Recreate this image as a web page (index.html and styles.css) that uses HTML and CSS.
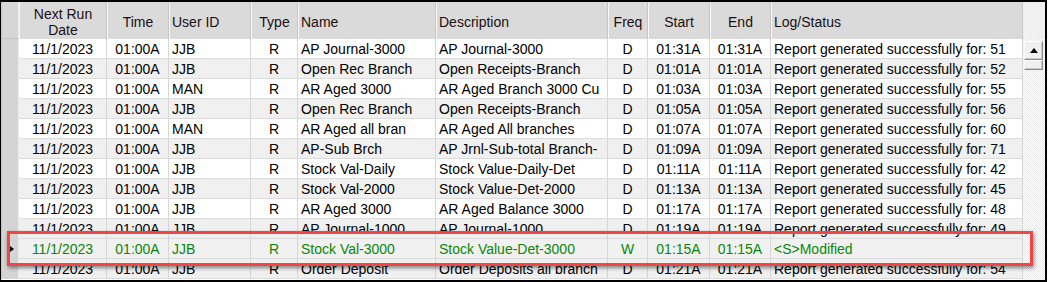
FILE: index.html
```html
<!DOCTYPE html>
<html>
<head>
<meta charset="utf-8">
<link rel="stylesheet" href="styles.css">
</head>
<body>
<div class="frame">
  <div class="grid">
    <div class="row head">
      <div class="rh"></div>
      <div class="hc c">Next Run<br>Date</div>
      <div class="hc c">Time</div>
      <div class="hc">User ID</div>
      <div class="hc c">Type</div>
      <div class="hc">Name</div>
      <div class="hc">Description</div>
      <div class="hc c">Freq</div>
      <div class="hc c">Start</div>
      <div class="hc c">End</div>
      <div class="hc">Log/Status</div>
    </div>
    <div class="row">
      <div class="rh"></div><div class="d c">11/1/2023</div><div class="d c">01:00A</div><div class="d">JJB</div><div class="d c">R</div><div class="d">AP Journal-3000</div><div class="d">AP Journal-3000</div><div class="d c">D</div><div class="d c">01:31A</div><div class="d c">01:31A</div><div class="d">Report generated successfully for: 51</div>
    </div>
    <div class="row alt">
      <div class="rh"></div><div class="d c">11/1/2023</div><div class="d c">01:00A</div><div class="d">JJB</div><div class="d c">R</div><div class="d">Open Rec Branch</div><div class="d">Open Receipts-Branch</div><div class="d c">D</div><div class="d c">01:01A</div><div class="d c">01:01A</div><div class="d">Report generated successfully for: 52</div>
    </div>
    <div class="row">
      <div class="rh"></div><div class="d c">11/1/2023</div><div class="d c">01:00A</div><div class="d">MAN</div><div class="d c">R</div><div class="d">AR Aged 3000</div><div class="d">AR Aged Branch 3000 Cu</div><div class="d c">D</div><div class="d c">01:03A</div><div class="d c">01:03A</div><div class="d">Report generated successfully for: 55</div>
    </div>
    <div class="row alt">
      <div class="rh"></div><div class="d c">11/1/2023</div><div class="d c">01:00A</div><div class="d">JJB</div><div class="d c">R</div><div class="d">Open Rec Branch</div><div class="d">Open Receipts-Branch</div><div class="d c">D</div><div class="d c">01:05A</div><div class="d c">01:05A</div><div class="d">Report generated successfully for: 56</div>
    </div>
    <div class="row">
      <div class="rh"></div><div class="d c">11/1/2023</div><div class="d c">01:00A</div><div class="d">MAN</div><div class="d c">R</div><div class="d">AR Aged all bran</div><div class="d">AR Aged All branches</div><div class="d c">D</div><div class="d c">01:07A</div><div class="d c">01:07A</div><div class="d">Report generated successfully for: 60</div>
    </div>
    <div class="row alt">
      <div class="rh"></div><div class="d c">11/1/2023</div><div class="d c">01:00A</div><div class="d">JJB</div><div class="d c">R</div><div class="d">AP-Sub Brch</div><div class="d">AP Jrnl-Sub-total Branch-</div><div class="d c">D</div><div class="d c">01:09A</div><div class="d c">01:09A</div><div class="d">Report generated successfully for: 71</div>
    </div>
    <div class="row">
      <div class="rh"></div><div class="d c">11/1/2023</div><div class="d c">01:00A</div><div class="d">JJB</div><div class="d c">R</div><div class="d">Stock Val-Daily</div><div class="d">Stock Value-Daily-Det</div><div class="d c">D</div><div class="d c">01:11A</div><div class="d c">01:11A</div><div class="d">Report generated successfully for: 42</div>
    </div>
    <div class="row alt">
      <div class="rh"></div><div class="d c">11/1/2023</div><div class="d c">01:00A</div><div class="d">JJB</div><div class="d c">R</div><div class="d">Stock Val-2000</div><div class="d">Stock Value-Det-2000</div><div class="d c">D</div><div class="d c">01:13A</div><div class="d c">01:13A</div><div class="d">Report generated successfully for: 45</div>
    </div>
    <div class="row">
      <div class="rh"></div><div class="d c">11/1/2023</div><div class="d c">01:00A</div><div class="d">JJB</div><div class="d c">R</div><div class="d">AR Aged 3000</div><div class="d">AR Aged Balance 3000</div><div class="d c">D</div><div class="d c">01:17A</div><div class="d c">01:17A</div><div class="d">Report generated successfully for: 48</div>
    </div>
    <div class="row alt">
      <div class="rh"></div><div class="d c">11/1/2023</div><div class="d c">01:00A</div><div class="d">JJB</div><div class="d c">R</div><div class="d">AP Journal-1000</div><div class="d">AP Journal-1000</div><div class="d c">D</div><div class="d c">01:19A</div><div class="d c">01:19A</div><div class="d">Report generated successfully for: 49</div>
    </div>
    <div class="row sel">
      <div class="rh"><span class="cur"></span></div><div class="d c">11/1/2023</div><div class="d c">01:00A</div><div class="d">JJB</div><div class="d c">R</div><div class="d">Stock Val-3000</div><div class="d">Stock Value-Det-3000</div><div class="d c">W</div><div class="d c">01:15A</div><div class="d c">01:15A</div><div class="d">&lt;S&gt;Modified</div>
    </div>
    <div class="row alt">
      <div class="rh"></div><div class="d c">11/1/2023</div><div class="d c">01:00A</div><div class="d">JJB</div><div class="d c">R</div><div class="d">Order Deposit</div><div class="d">Order Deposits all branch</div><div class="d c">D</div><div class="d c">01:21A</div><div class="d c">01:21A</div><div class="d">Report generated successfully for: 54</div>
    </div>
  </div>
  <div class="scroll">
    <div class="scroll-top"></div>
    <div class="track">
      <div class="sbtn"><span class="up"></span></div>
      <div class="thumb"></div>
    </div>
  </div>
  <div class="mark"></div>
</div>
</body>
</html>
```

FILE: styles.css
```css
html, body {
  margin: 0;
  padding: 0;
  background: #fff;
}
body {
  font-family: "Liberation Sans", Arial, sans-serif;
  font-size: 14px;
  color: #000;
}
.frame {
  position: relative;
  box-sizing: border-box;
  width: 1047px;
  height: 282px;
  border-style: solid;
  border-color: #000;
  border-width: 2px 2px 2px 1px;
  display: flex;
  overflow: hidden;
  background: #fff;
}
.grid {
  width: 1022px;
  flex: none;
  display: flex;
  flex-direction: column;
}
.row {
  display: grid;
  grid-template-columns: 18px 88px 62px 82px 47px 138px 172px 40px 62px 61px 252px;
  height: 20px;
  flex: none;
  background: #fff;
}
.row.alt { background: #f0f0f0; }
.row.sel { background: #f1f1f1; color: #0a870a; }
.row.head {
  height: 37px;
  background: #dadada;
}
.rh {
  box-sizing: border-box;
  background: #d4d4d4;
  border-left: 1px solid #c4c4c4;
  border-right: 1px solid #ececec;
  display: flex;
  align-items: center;
  padding-left: 8px;
}
.head .rh {
  background: #d6d6d6;
  border-bottom: 1px solid #c2c2c2;
}
.cur {
  width: 0;
  height: 0;
  border-left: 4px solid #000;
  border-top: 3px solid transparent;
  border-bottom: 3px solid transparent;
}
.hc {
  box-sizing: border-box;
  border-left: 1px solid #f7f7f7;
  border-right: 1px solid #c6c6c6;
  padding: 3px 2px 0 2px;
  line-height: 16px;
  color: #1a1010;
  display: flex;
  align-items: center;
  white-space: nowrap;
  overflow: hidden;
}
.hc.c {
  justify-content: center;
  text-align: center;
}
.d {
  box-sizing: border-box;
  border-right: 1px solid #d6d6d6;
  border-bottom: 1px solid #dcdcdc;
  padding: 0 2px 0 3px;
  line-height: 20px;
  white-space: nowrap;
  overflow: hidden;
}
.d.c { text-align: center; padding: 0 1px; }
.scroll {
  width: 22px;
  flex: none;
  display: flex;
  flex-direction: column;
}
.scroll-top {
  height: 37px;
  flex: none;
  background: #f0f0f0;
}
.track {
  flex: 1;
  display: flex;
  flex-direction: column;
  padding: 2px 2px 0 1px;
  background: repeating-conic-gradient(#ffffff 0 25%, #e9e9e9 0 50%) 0 0 / 2px 2px;
}
.sbtn, .thumb {
  box-sizing: border-box;
  background: #f0f0f0;
  border-top: 1px solid #fdfdfd;
  border-left: 1px solid #fdfdfd;
  border-right: 1px solid #8c8c8c;
  border-bottom: 1px solid #8c8c8c;
  box-shadow: inset -1px -1px 0 #c8c8c8;
}
.sbtn {
  height: 19px;
  display: flex;
  align-items: center;
  justify-content: center;
}
.up {
  width: 0;
  height: 0;
  border-left: 4px solid transparent;
  border-right: 4px solid transparent;
  border-bottom: 5px solid #000;
  margin-bottom: 1px;
}
.thumb {
  height: 10px;
}
.mark {
  position: absolute;
  left: 6px;
  top: 229px;
  width: 1026px;
  height: 35px;
  box-sizing: border-box;
  border: 3px solid #f04646;
  box-shadow: 1px 2px 4px rgba(0, 0, 0, 0.45);
}
```
